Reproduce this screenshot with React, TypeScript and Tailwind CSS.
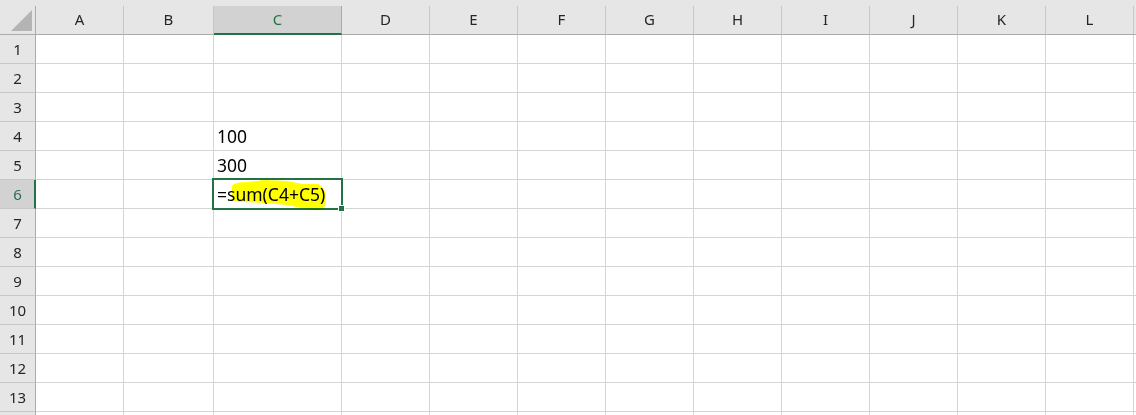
import React from "react";

const cols: { label: string; w: string }[] = [
  { label: "A", w: "w-[88px]" },
  { label: "B", w: "w-[90px]" },
  { label: "C", w: "w-[128px]" },
  { label: "D", w: "w-[88px]" },
  { label: "E", w: "w-[88px]" },
  { label: "F", w: "w-[88px]" },
  { label: "G", w: "w-[88px]" },
  { label: "H", w: "w-[88px]" },
  { label: "I", w: "w-[88px]" },
  { label: "J", w: "w-[88px]" },
  { label: "K", w: "w-[88px]" },
  { label: "L", w: "w-[88px]" },
];

const data: Record<string, string> = {
  "4-C": "100",
  "5-C": "300",
  "6-C": "=sum(C4+C5)",
};

export default function App() {
  const rows = Array.from({ length: 14 }, (_, i) => i + 1);
  return (
    <div className="relative w-[1136px] h-[415px] overflow-hidden bg-white">
      {/* Column header */}
      <div className="flex h-[35px] bg-[#e6e6e6] font-['Noto_Sans',sans-serif] text-[15px] text-[#262626]">
        <div className="w-[36px] flex flex-col shrink-0">
          <div className="h-[6px]" />
          <div className="relative flex-1 border-r border-b border-r-[#ababab] border-b-[#ababab]">
            <svg className="absolute left-[11px] top-[4px]" width="22" height="22" viewBox="0 0 22 22">
              <polygon points="21,0 21,21 0,21" fill="#b4b4b4" />
            </svg>
          </div>
        </div>
        {cols.map((c) => {
          const sel = c.label === "C";
          return (
            <div key={c.label} className={`${c.w} flex flex-col shrink-0`}>
              <div className="h-[6px]" />
              <div
                className={
                  sel
                    ? "flex-1 flex items-center justify-center bg-[#d2d2d2] border-r border-r-[#ababab] border-b-2 border-b-[#217346] text-[#217346] pb-[1px]"
                    : "flex-1 flex items-center justify-center border-r border-b border-r-[#c6c6c6] border-b-[#ababab] pb-[2px]"
                }
              >
                {c.label}
              </div>
            </div>
          );
        })}
        <div className="flex-1 flex flex-col">
          <div className="h-[6px]" />
          <div className="flex-1 border-b border-b-[#ababab]" />
        </div>
      </div>

      {/* Rows */}
      {rows.map((r) => {
        const selRow = r === 6;
        const label = r <= 13 ? String(r) : "";
        return (
          <div key={r} className="flex h-[29px]">
            <div
              className={
                selRow
                  ? "w-[36px] shrink-0 flex items-center justify-center bg-[#d2d2d2] border-r-2 border-r-[#217346] border-b border-b-[#c6c6c6] text-[#217346] font-['Noto_Sans',sans-serif] text-[15px] pl-[1px]"
                  : "w-[36px] shrink-0 flex items-center justify-center bg-[#e6e6e6] border-r border-r-[#ababab] border-b border-b-[#c6c6c6] text-[#262626] font-['Noto_Sans',sans-serif] text-[15px]"
              }
            >
              {label}
            </div>
            {cols.map((c) => {
              const v = data[`${r}-${c.label}`];
              return (
                <div
                  key={c.label}
                  className={`${c.w} shrink-0 border-r border-b border-[#d4d4d4] flex items-center pl-[3px] pt-[1px] font-['Noto_Sans',sans-serif] text-[17.5px] text-black whitespace-nowrap`}
                >
                  {v ?? ""}
                </div>
              );
            })}
            <div className="flex-1 border-b border-[#d4d4d4]" />
          </div>
        );
      })}

      {/* Selection box */}
      <div className="absolute left-[212px] top-[178px] w-[131px] h-[32px] border-2 border-[#217346]" />
      <div className="absolute left-[338px] top-[205px] w-[7px] h-[7px] bg-[#217346] border border-white" />

      {/* Freehand highlight */}
      <svg
        className="absolute left-0 top-0 pointer-events-none mix-blend-multiply"
        width="1136"
        height="415"
        viewBox="0 0 1136 415"
      >
        <path
          d="M232 186 Q234 182 248 182 L264 180 L288 181 Q296 183 303 184 L318 184 Q325 187 326 196 L325 206 Q322 211 313 210 L302 208 L287 205 L266 203 L244 202 Q232 202 232 198 Z"
          fill="#ffff00"
        />
      </svg>
    </div>
  );
}
